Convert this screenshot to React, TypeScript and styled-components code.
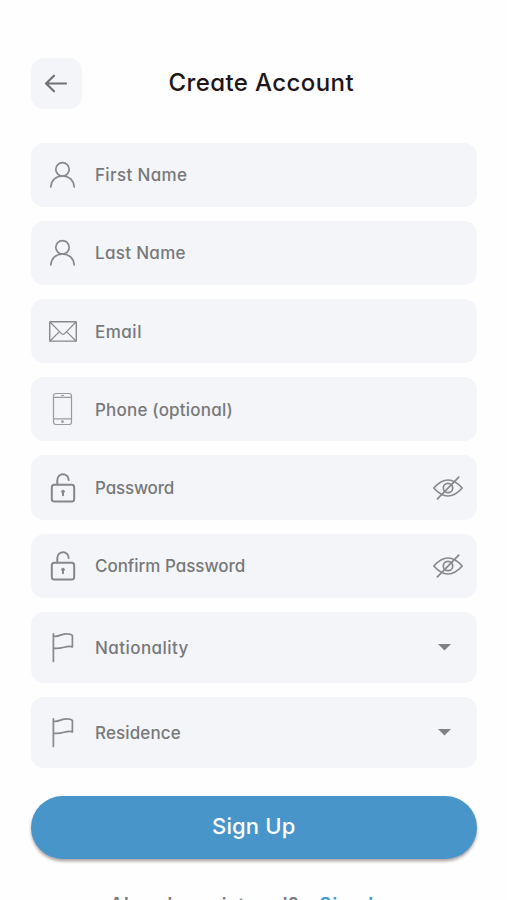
import React from "react";
import styled, { createGlobalStyle } from "styled-components";

const GlobalStyle = createGlobalStyle`
  * { box-sizing: border-box; }
  html, body { margin: 0; padding: 0; background: #fff; overflow: hidden; }
`;

const Screen = styled.main`
  width: 507px;
  height: 900px;
  overflow: hidden;
  padding: 57.5px 30px 0 30.5px;
  background: #fefefe;
  display: flex;
  flex-direction: column;
  font-family: Inter, Lato, sans-serif;
  font-feature-settings: "cv11";
  font-weight: 500;
  color: #777879;
`;

const Header = styled.header`
  height: 51px;
  flex: none;
  display: grid;
  grid-template-columns: 51px 1fr 51px;
  align-items: center;
`;

const BackButton = styled.button`
  width: 51px;
  height: 51px;
  border: 0;
  padding: 0;
  border-radius: 13px;
  background: #f3f5f9;
  display: grid;
  place-items: center;
`;

const Title = styled.h1`
  margin: 0 0 1px 15px;
  text-align: center;
  font-size: 24px;
  line-height: 30px;
  font-weight: 500;
  letter-spacing: 0.4px;
  color: #211518;
  white-space: nowrap;
`;

const Form = styled.form`
  margin-top: 34.2px;
  display: flex;
  flex-direction: column;
  gap: 14px;
`;

const Field = styled.div<{ $tall?: boolean }>`
  height: ${(p) => (p.$tall ? 71 : 64.2)}px;
  flex: none;
  border-radius: 13px;
  background: #f3f5f9;
  display: grid;
  grid-template-columns: 64.5px 1fr 57.5px;
  align-items: center;
`;

const IconCell = styled.span`
  display: grid;
  place-items: center;
  height: 32px;
`;

const Label = styled.span<{ $tracking: number }>`
  padding-top: 1px;
  font-size: 17px;
  line-height: 24px;
  letter-spacing: ${(p) => p.$tracking}px;
  white-space: nowrap;
`;

const Trailing = styled(IconCell)<{ $shift?: number }>`
  padding-right: ${(p) => p.$shift ?? 0}px;
`;

const Svg = styled.svg`
  display: block;
  overflow: visible;
  fill: none;
  stroke: #87888b;
  stroke-width: 1.7;
  stroke-linecap: round;
  stroke-linejoin: round;
`;

const SubmitButton = styled.button`
  margin-top: 14px;
  height: 63px;
  flex: none;
  border: 0;
  border-radius: 32px;
  padding: 0 0 2px;
  background: #4895ca;
  color: #fff;
  font: inherit;
  font-feature-settings: inherit;
  font-size: 22px;
  letter-spacing: 0.15px;
  box-shadow: 0 2.5px 3px rgba(70, 40, 40, 0.4);
`;

const Footer = styled.footer`
  margin: 34px 0 0 79.5px;
  display: flex;
  gap: 20.5px;
  font-size: 18px;
  line-height: 24px;
  white-space: nowrap;
`;

const Prompt = styled.span`
  font-weight: 600;
  letter-spacing: 0.93px;
`;

const SignInLink = styled.a`
  color: #4895ca;
  font-weight: 600;
  letter-spacing: 1.1px;
`;

const UserIcon = () => (
  <Svg width="25" height="26" viewBox="0 0 25 26">
    <circle cx="12.5" cy="7.3" r="6.7" />
    <path d="M.8 25C1.3 18.3 6 14 12.5 14S23.7 18.3 24.2 25" />
  </Svg>
);

const ThinSvg = styled(Svg)`
  stroke: #999b9f;
  stroke-width: 1.2;
`;

const MailSvg = styled(Svg)`
  stroke-width: 1.4;
`;

const MailIcon = () => (
  <MailSvg width="28" height="21" viewBox="0 0 28 21">
    <rect x="0.7" y="0.7" width="26.6" height="19.4" rx="0.8" />
    <path
      d="M1 1 11.2 11.4Q14 15.2 16.8 11.4L27 1M1 20 10.2 10.8M27 20 17.8 10.8"
      strokeWidth="1.2"
    />
  </MailSvg>
);

const PhoneIcon = () => (
  <ThinSvg width="19" height="32" viewBox="0 0 19 32">
    <rect x="0.5" y="0.5" width="18" height="31" rx="2.5" />
    <path d="M.5 4.3h18M.5 25.8h18M8.5 2.5h2" />
    <circle cx="9.5" cy="28.7" r=".8" />
  </ThinSvg>
);

const LockSvg = styled(Svg)`
  stroke-width: 2;
`;

const LockIcon = () => (
  <LockSvg width="24" height="30" viewBox="0 0 24 30">
    <rect x="0.8" y="11.8" width="22.4" height="16.8" rx="2.5" />
    <path d="M6.3 11.5V7.1A5.7 5.9 0 0 1 17.7 7.1" />
    <circle cx="12" cy="18.6" r="1.4" fill="#87888b" strokeWidth="1" />
    <path d="M12 19v3.2" />
  </LockSvg>
);

const FlagSvg = styled(Svg)`
  margin-top: 2px;
`;

const FlagIcon = () => (
  <FlagSvg width="22" height="30" viewBox="0 0 22 30">
    <path d="M1.4 28.5V.8M1.4 3C6 4.7 9.8.4 15 .8Q18.6.8 20.4 2.4V14C15.4 11.4 9.5 16.9 1.4 15.1" />
  </FlagSvg>
);

const EyeOffIcon = () => (
  <Svg width="30" height="24" viewBox="0 0 30 24">
    <path d="M.8 12Q15-4 29.2 12 15 28 .8 12ZM4.4 22.8 25.8 1.2" />
    <circle cx="15" cy="12" r="4.7" />
  </Svg>
);

const CaretIcon = () => (
  <Svg width="13" height="7" viewBox="0 0 13 7">
    <path d="M0 0H13L6.5 6.5Z" fill="#808184" stroke="none" />
  </Svg>
);

const ArrowSvg = styled(Svg)`
  stroke: #707173;
  stroke-width: 2.2;
`;

const fields = [
  { label: "First Name", Icon: UserIcon, tracking: 0.35 },
  { label: "Last Name", Icon: UserIcon, tracking: 0.32 },
  { label: "Email", Icon: MailIcon, tracking: 0.5 },
  { label: "Phone (optional)", Icon: PhoneIcon, tracking: 0.2 },
  { label: "Password", Icon: LockIcon, tracking: -0.17, hidden: true },
  { label: "Confirm Password", Icon: LockIcon, tracking: -0.03, hidden: true },
  { label: "Nationality", Icon: FlagIcon, tracking: 0.44, select: true },
  { label: "Residence", Icon: FlagIcon, tracking: 0.12, select: true },
];

export default function App() {
  return (
    <>
      <GlobalStyle />
      <Screen>
        <Header>
          <BackButton type="button" aria-label="Back">
            <ArrowSvg width="22" height="17" viewBox="0 0 22 17">
              <path d="M21 8.5H1M9 .7 1 8.5 9 16.3" />
            </ArrowSvg>
          </BackButton>
          <Title>Create Account</Title>
        </Header>
        <Form>
          {fields.map(({ label, Icon, tracking, hidden, select }) => (
            <Field key={label} $tall={select}>
              <IconCell>
                <Icon />
              </IconCell>
              <Label $tracking={tracking}>{label}</Label>
              {hidden && (
                <Trailing>
                  <EyeOffIcon />
                </Trailing>
              )}
              {select && (
                <Trailing $shift={7}>
                  <CaretIcon />
                </Trailing>
              )}
            </Field>
          ))}
          <SubmitButton type="button">Sign Up</SubmitButton>
        </Form>
        <Footer>
          <Prompt>Already registered?</Prompt>
          <SignInLink>Sign In</SignInLink>
        </Footer>
      </Screen>
    </>
  );
}
